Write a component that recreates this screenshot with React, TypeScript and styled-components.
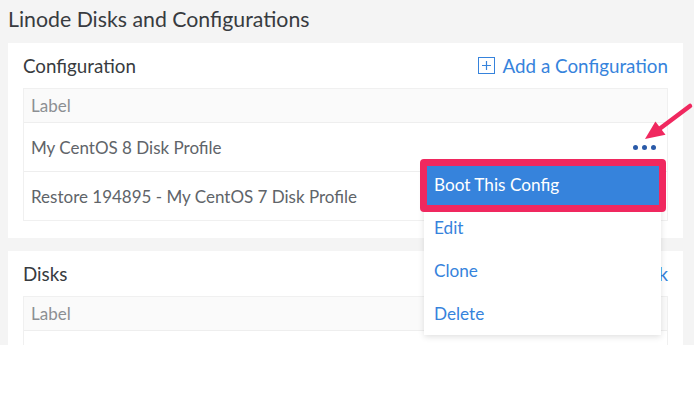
import React from "react";
import styled, { createGlobalStyle } from "styled-components";

const Global = createGlobalStyle`
  html, body { margin: 0; padding: 0; background: #ffffff; }
  body { font-family: Lato, "Open Sans", "Liberation Sans", sans-serif; -webkit-font-smoothing: antialiased; }
  * { box-sizing: border-box; }
`;

const Page = styled.div`
  position: relative;
  height: 345px;
  overflow: hidden;
  background: #f4f4f4;
  padding: 0 11px 0 8px;
`;

const Title = styled.h1`
  margin: 0;
  height: 43px;
  display: flex;
  align-items: center;
  padding-bottom: 5px;
  font-size: 21.3px;
  font-weight: 400;
  color: #383b40;
`;

const Panel = styled.section`
  background: #ffffff;
  padding: 0 15px 17px;
  margin-bottom: 13px;
`;

const PanelHeader = styled.div`
  height: 45px;
  display: flex;
  align-items: center;
  justify-content: space-between;
`;

const PanelTitle = styled.h2`
  margin: 0;
  font-size: 18.8px;
  font-weight: 400;
  color: #383b40;
`;

const AddLink = styled.a`
  display: flex;
  align-items: center;
  gap: 8px;
  font-size: 18.8px;
  color: #3683dc;
  text-decoration: none;
`;

const Table = styled.div`
  border: 1px solid #f0f0f0;
`;

const HeadRow = styled.div`
  height: 33px;
  display: flex;
  align-items: center;
  padding: 0 7px;
  background: #fafafa;
  font-size: 17px;
  color: #8c8f93;
`;

const Row = styled.div`
  position: relative;
  height: 49px;
  display: flex;
  align-items: center;
  justify-content: space-between;
  padding: 0 11px 0 7px;
  border-top: 1px solid #eeeeee;
  font-size: 17px;
  color: #606469;
`;

const Dots = styled.button`
  border: 0;
  background: none;
  padding: 0;
  display: flex;
  gap: 4px;
  cursor: pointer;
  span {
    width: 5px;
    height: 5px;
    border-radius: 50%;
    background: #2a5aa8;
  }
`;

const Menu = styled.ul`
  position: absolute;
  top: 40px;
  left: 400px;
  width: 237px;
  margin: 0;
  padding: 0;
  list-style: none;
  background: #ffffff;
  box-shadow: 0 2px 6px rgba(0, 0, 0, 0.12);
  z-index: 5;
`;

const MenuItem = styled.li<{ $active?: boolean }>`
  position: relative;
  height: 43px;
  display: flex;
  align-items: center;
  padding: 0 10px;
  font-size: 17.2px;
  color: ${(p) => (p.$active ? "#ffffff" : "#3683dc")};
  background: ${(p) => (p.$active ? "#3683dc" : "transparent")};
`;

const Highlight = styled.span`
  position: absolute;
  top: -4px;
  left: -4px;
  right: -5px;
  bottom: -6px;
  border: 7px solid #f0285f;
  border-radius: 4px;
  pointer-events: none;
`;

const Arrow = styled.svg`
  position: absolute;
  left: 0;
  top: 0;
  pointer-events: none;
  z-index: 6;
`;

const PlusIcon = () => (
  <svg width="17" height="17" viewBox="0 0 17 17" fill="none">
    <rect x="0.5" y="0.5" width="16" height="16" stroke="#3683dc" strokeWidth="1" />
    <path d="M8.5 4v9M4 8.5h9" stroke="#3683dc" strokeWidth="1.2" />
  </svg>
);

export default function App() {
  return (
    <>
      <Global />
      <Page>
        <Title>Linode Disks and Configurations</Title>
        <Panel>
          <PanelHeader>
            <PanelTitle>Configuration</PanelTitle>
            <AddLink href="#">
              <PlusIcon />
              Add a Configuration
            </AddLink>
          </PanelHeader>
          <Table>
            <HeadRow>Label</HeadRow>
            <Row>
              My CentOS 8 Disk Profile
              <Dots aria-label="actions">
                <span />
                <span />
                <span />
              </Dots>
              <Menu>
                <MenuItem $active>
                  Boot This Config
                  <Highlight />
                </MenuItem>
                <MenuItem>Edit</MenuItem>
                <MenuItem>Clone</MenuItem>
                <MenuItem>Delete</MenuItem>
              </Menu>
            </Row>
            <Row>Restore 194895 - My CentOS 7 Disk Profile</Row>
          </Table>
        </Panel>
        <Panel>
          <PanelHeader>
            <PanelTitle>Disks</PanelTitle>
            <AddLink href="#">
              <PlusIcon />
              Add a Disk
            </AddLink>
          </PanelHeader>
          <Table>
            <HeadRow>Label</HeadRow>
            <Row />
          </Table>
        </Panel>
        <Arrow width="694" height="345" viewBox="0 0 694 345">
          <line x1="690" y1="106" x2="658" y2="130" stroke="#f0285f" strokeWidth="4.5" strokeLinecap="round" />
          <polygon points="645,139 665.5,134.8 655.4,121.6" fill="#f0285f" />
        </Arrow>
      </Page>
    </>
  );
}
